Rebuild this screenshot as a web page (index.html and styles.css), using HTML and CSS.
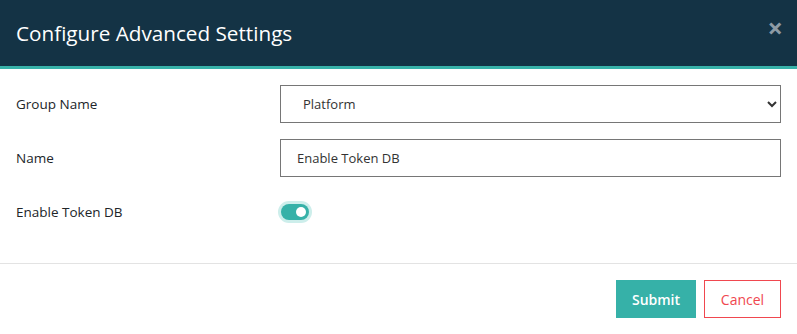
FILE: index.html
```html
<!DOCTYPE html>
<html lang="en">

<head>
    <meta charset="UTF-8" />
    <meta name="viewport" content="width=device-width, initial-scale=1.0" />
    <title>Configure Advanced Settings</title>
    <link rel="stylesheet" href="styles.css">
</head>

<body>
    <div class="modal">
        <!-- Header -->
        <div class="modal-header">
            <h2 class="modal-title">Configure Advanced Settings</h2>
            <span class="close-btn">&times;</span>
        </div>

        <!-- Form body -->
        <form class="modal-body">
            <div class="form-row">
                <label for="group">Group Name</label>
                <select id="group" class="field select-field">
                    <option>Platform</option>
                </select>
            </div>
            <div class="form-row">
                <label for="name">Name</label>
                <input type="text" id="name" class="field" value="Enable Token DB" />
            </div>
            <div class="form-row">
                <label>Enable Token DB</label>
                <span class="toggle"><span class="knob"></span></span>
            </div>
        </form>

        <!-- Footer -->
        <div class="modal-footer">
            <button class="btn btn-submit">Submit</button>
            <button class="btn btn-cancel">Cancel</button>
        </div>
    </div>
</body>

</html>
```

FILE: styles.css
```css
body {
    font-family: "Open Sans", Arial, sans-serif;
    background-color: #fff;
    margin: 0;
    padding: 0;
}

.modal {
    width: 797px;
}

.modal-header {
    height: 66px;
    background-color: #143345;
    border-bottom: 3px solid #38b2a9;
    display: flex;
    align-items: center;
    justify-content: space-between;
    padding: 0 16px;
}

.modal-title {
    margin: 0;
    color: #fff;
    font-size: 20.7px;
    font-weight: 400;
}

.close-btn {
    color: #8d9ba5;
    font-size: 27px;
    font-weight: 700;
    line-height: 1;
    margin-top: -12px;
    margin-right: -2px;
}

.modal-body {
    padding: 16px 16px 32px;
    display: flex;
    flex-direction: column;
    gap: 16px;
}

.form-row {
    display: grid;
    grid-template-columns: 264px 501px;
    align-items: center;
    height: 38px;
}

.form-row label {
    font-size: 13.5px;
    color: #212529;
}

.field {
    height: 38px;
    box-sizing: border-box;
    border: 1px solid #767676;
    border-radius: 0;
    padding: 0 16px;
    font-family: "Open Sans", Arial, sans-serif;
    font-size: 13px;
    color: #333;
    background-color: #fff;
    outline: none;
}

.select-field {
    padding-left: 18px;
}

.toggle {
    width: 28px;
    height: 16px;
    margin-left: 1px;
    border-radius: 8px;
    background-color: #36b1a8;
    box-shadow: 0 0 0 3px #cdeeeb;
    position: relative;
}

.knob {
    position: absolute;
    top: 3px;
    right: 3px;
    width: 10px;
    height: 10px;
    border-radius: 50%;
    background-color: #fff;
}

.modal-footer {
    border-top: 1px solid #e3e3e3;
    padding: 16px;
    display: flex;
    justify-content: flex-end;
    gap: 8px;
}

.btn {
    height: 38px;
    font-family: "Open Sans", Arial, sans-serif;
    font-size: 14px;
    font-weight: 600;
    cursor: pointer;
}

.btn-submit {
    width: 80px;
    background-color: #36b1a8;
    color: #fff;
    border: none;
}

.btn-cancel {
    width: 77px;
    background-color: #fff;
    color: #f0474f;
    border: 1px solid #f0474f;
    font-weight: 400;
}
```
